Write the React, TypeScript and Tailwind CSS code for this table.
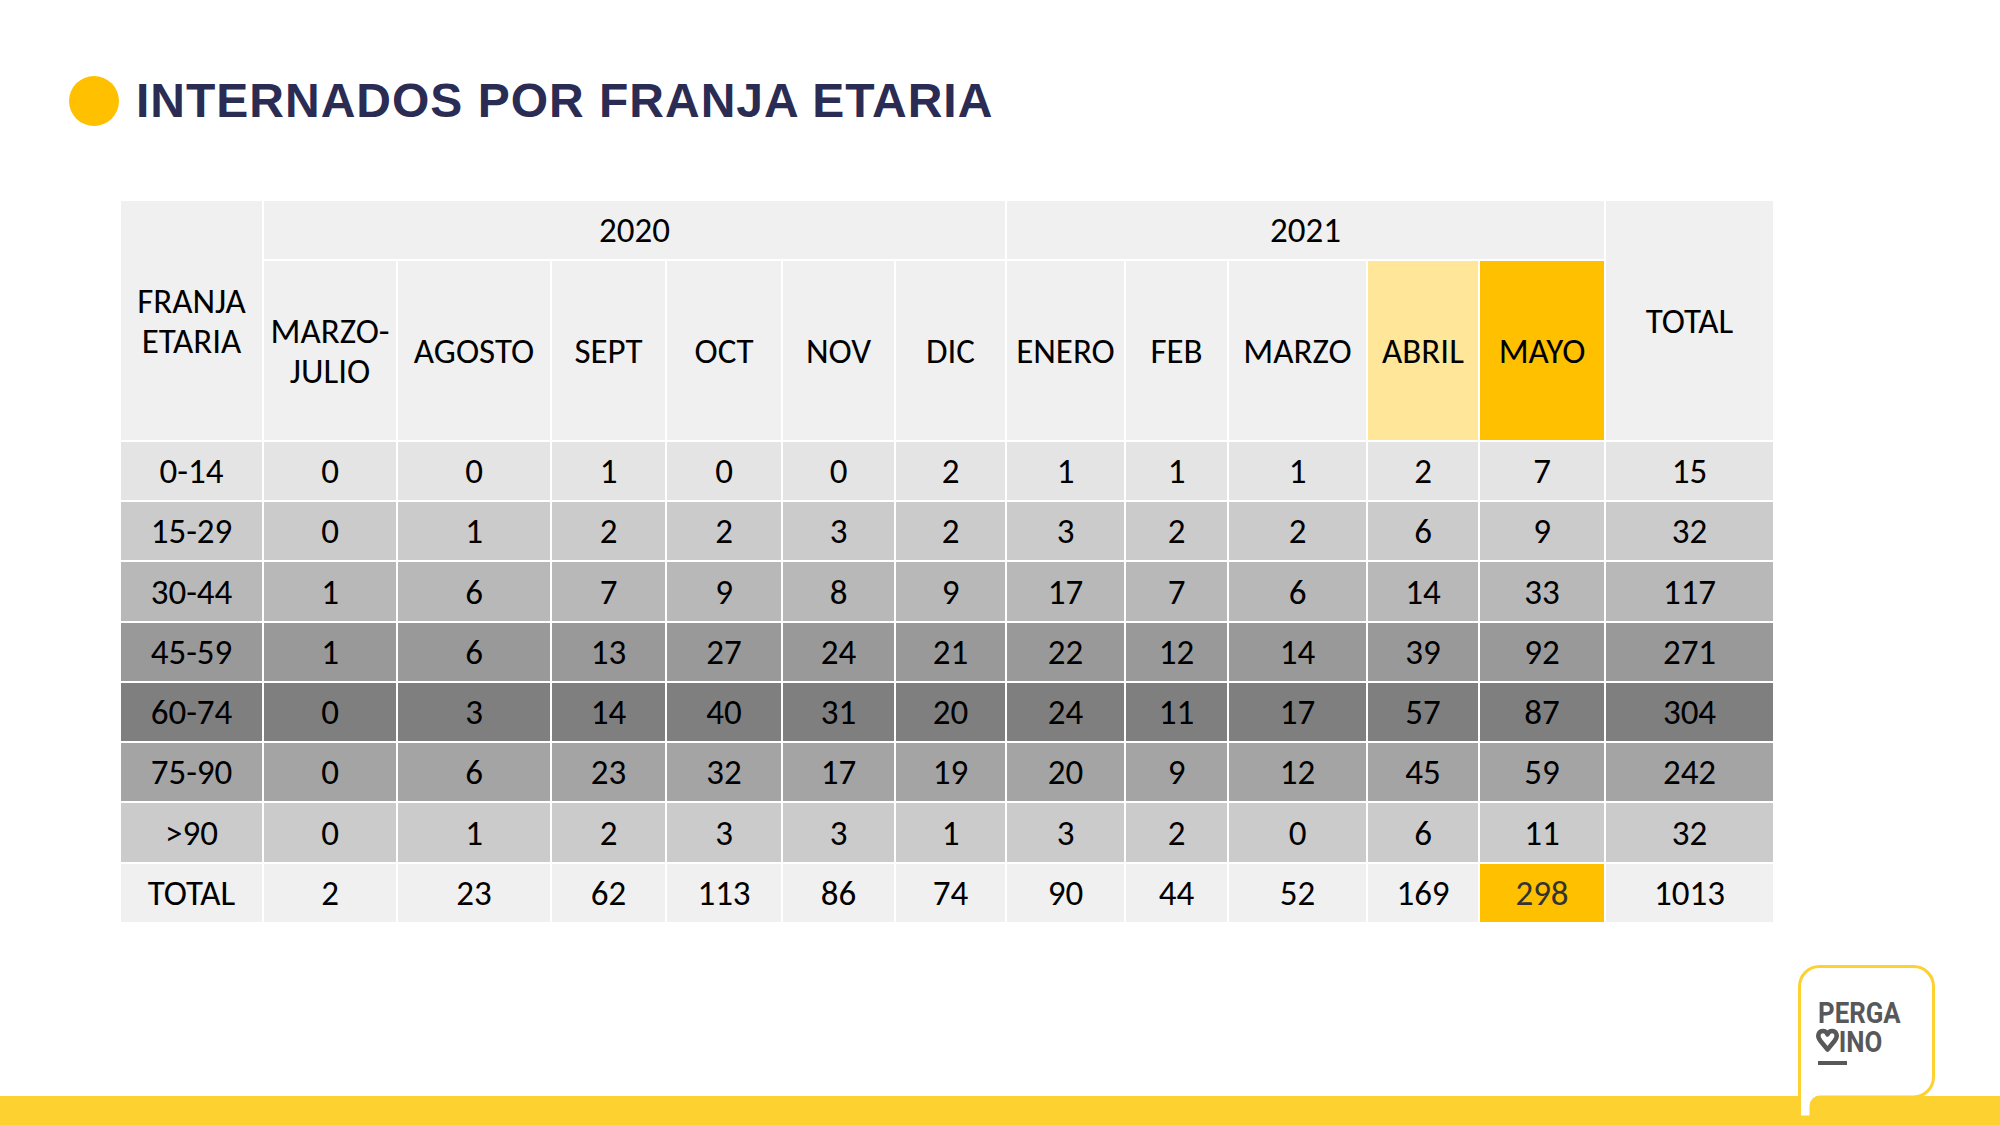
import React from 'react';

const rowColors = [
  'bg-[#e4e4e4]',
  'bg-[#cbcbcb]',
  'bg-[#b8b8b8]',
  'bg-[#999999]',
  'bg-[#7f7f7f]',
  'bg-[#a4a4a4]',
  'bg-[#cbcbcb]',
];

const rows: { label: string; values: string[]; total: string }[] = [
  { label: '0-14', values: ['0', '0', '1', '0', '0', '2', '1', '1', '1', '2', '7'], total: '15' },
  { label: '15-29', values: ['0', '1', '2', '2', '3', '2', '3', '2', '2', '6', '9'], total: '32' },
  { label: '30-44', values: ['1', '6', '7', '9', '8', '9', '17', '7', '6', '14', '33'], total: '117' },
  { label: '45-59', values: ['1', '6', '13', '27', '24', '21', '22', '12', '14', '39', '92'], total: '271' },
  { label: '60-74', values: ['0', '3', '14', '40', '31', '20', '24', '11', '17', '57', '87'], total: '304' },
  { label: '75-90', values: ['0', '6', '23', '32', '17', '19', '20', '9', '12', '45', '59'], total: '242' },
  { label: '>90', values: ['0', '1', '2', '3', '3', '1', '3', '2', '0', '6', '11'], total: '32' },
];

const totals = ['2', '23', '62', '113', '86', '74', '90', '44', '52', '169', '298'];

const months = ['AGOSTO', 'SEPT', 'OCT', 'NOV', 'DIC', 'ENERO', 'FEB', 'MARZO'];

const cell = 'flex items-center justify-center text-center';

const Logo: React.FC = () => (
  <div className="absolute left-[1790px] top-[960px] w-[160px] h-[165px]">
    <svg width="160" height="165" viewBox="0 0 160 165" className="absolute left-0 top-0">
      <path
        d="M9.5 157 V26.5 A20 20 0 0 1 29.5 6.5 H123.5 A20 20 0 0 1 143.5 26.5 V117 A20 20 0 0 1 123.5 137 H30 A9 9 0 0 0 21 146 V157 Z"
        fill="#ffffff"
        stroke="#fdd12f"
        strokeWidth="3"
      />
      <path
        d="M37.5 89.5 L30.5 81 C26.5 76 28.5 71 33 71 C35.3 71 36.8 72.6 37.5 74.5 C38.2 72.6 39.7 71 42 71 C46.5 71 48.5 76 44.5 81 Z"
        fill="none"
        stroke="#58585a"
        strokeWidth="4.5"
        strokeLinejoin="round"
      />
      <rect x="28" y="101" width="29" height="4" fill="#58585a" />
    </svg>
    <div className="absolute left-[28px] top-[38px] origin-left scale-x-[0.86] text-[30px] leading-[29px] font-bold text-[#58585a] font-['Roboto',sans-serif] whitespace-nowrap">
      PERGA
      <br />
      <span className="pl-[24px]">INO</span>
    </div>
  </div>
);

export default function App() {
  return (
    <div className="relative w-[2000px] h-[1125px] overflow-hidden bg-white flex flex-col">
      <div className="flex items-center gap-[17px] pl-[69px] pt-[76px]">
        <div className="w-[50px] h-[50px] rounded-full bg-[#ffc000]" />
        <h1 className="text-[48px] leading-none font-bold tracking-[1px] text-[#2b2c54] font-['Liberation_Sans',Arial,sans-serif]">
          INTERNADOS POR FRANJA ETARIA
        </h1>
      </div>

      <div className="ml-[121px] mt-[75px] w-[1652px] grid gap-[2px] bg-white grid-cols-[141px_132px_152px_113px_114px_111px_109px_117px_101px_137px_110px_124px_167px] grid-rows-[58px_179px_58px_58px_59px_58px_58px_58px_59px_58px] text-[35px] leading-[40px] text-black font-['Carlito','Lato',sans-serif]">
        <div className={`${cell} row-span-2 bg-[#f0f0f0]`}>
          FRANJA
          <br />
          ETARIA
        </div>
        <div className={`${cell} col-span-6 bg-[#f0f0f0]`}>2020</div>
        <div className={`${cell} col-span-5 bg-[#f0f0f0]`}>2021</div>
        <div className={`${cell} row-span-2 bg-[#f0f0f0]`}>TOTAL</div>

        <div className={`${cell} bg-[#f0f0f0]`}>
          MARZO-
          <br />
          JULIO
        </div>
        {months.map((m) => (
          <div key={m} className={`${cell} bg-[#f0f0f0]`}>
            {m}
          </div>
        ))}
        <div className={`${cell} bg-[#ffe699]`}>ABRIL</div>
        <div className={`${cell} bg-[#ffc000]`}>MAYO</div>

        {rows.map((r, i) => (
          <React.Fragment key={r.label}>
            <div className={`${cell} ${rowColors[i]}`}>{r.label}</div>
            {r.values.map((v, j) => (
              <div key={j} className={`${cell} ${rowColors[i]}`}>
                {v}
              </div>
            ))}
            <div className={`${cell} ${rowColors[i]}`}>{r.total}</div>
          </React.Fragment>
        ))}

        <div className={`${cell} bg-[#f0f0f0]`}>TOTAL</div>
        {totals.map((v, j) => (
          <div
            key={j}
            className={`${cell} ${j === 10 ? 'bg-[#ffc000] text-[#333333]' : 'bg-[#f0f0f0]'}`}
          >
            {v}
          </div>
        ))}
        <div className={`${cell} bg-[#f0f0f0]`}>1013</div>
      </div>

      <div className="mt-auto h-[29px] w-full bg-[#fdd12f]" />
      <Logo />
    </div>
  );
}
